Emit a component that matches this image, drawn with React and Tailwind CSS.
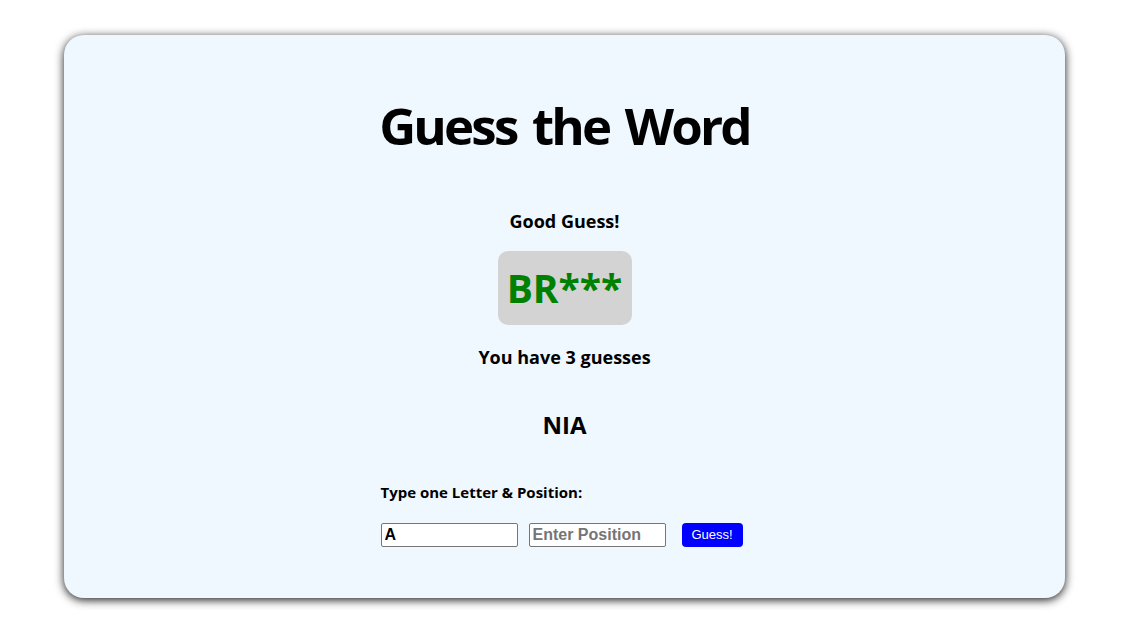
export default function App() {
  return (
    <div className="w-full min-h-[622px] bg-white pt-[35px]">
      <div className="ml-[64px] w-[1001px] h-[563px] rounded-[20px] bg-[#f0f8ff] shadow-[0_2px_10px_rgba(0,0,0,0.9)] flex flex-col items-center text-black font-['Open_Sans',sans-serif]">
        <h1 className="mt-[57px] h-[67px] leading-[67px] text-[51px] tracking-[-2.8px] [word-spacing:5px] font-bold">Guess the Word</h1>
        <p className="mt-[50px] h-[24px] leading-[24px] text-[18px] font-bold">Good Guess!</p>
        <div className="mt-[18px] w-[134px] h-[74px] rounded-[10px] bg-[#d3d3d3] flex items-center justify-center text-[39px] font-bold text-[#008000]">
          BR***
        </div>
        <p className="mt-[20px] h-[24px] leading-[24px] text-[18px] font-bold">You have 3 guesses</p>
        <p className="mt-[40px] h-[32px] leading-[32px] text-[24px] font-bold">NIA</p>
        <div className="w-[368px] flex flex-col items-start">
          <p className="mt-[41px] h-[20px] leading-[20px] text-[15px] font-bold">Type one Letter &amp; Position:</p>
          <div className="mt-[21px] flex items-center font-['Liberation_Sans',Arial,sans-serif]">
            <input
              defaultValue="A"
              className="w-[137px] h-[24px] border border-[#767676] rounded-[2px] bg-white px-[3px] text-[16px] font-bold text-black outline-none"
            />
            <input
              placeholder="Enter Position"
              className="ml-[11px] w-[137px] h-[24px] border border-[#767676] rounded-[2px] bg-white px-[3px] text-[16px] font-bold text-black placeholder:text-[#757575] outline-none"
            />
            <button className="ml-[16px] w-[61px] h-[24px] rounded-[4px] bg-[#0000ff] text-white text-[13px]">
              Guess!
            </button>
          </div>
        </div>
      </div>
    </div>
  );
}
